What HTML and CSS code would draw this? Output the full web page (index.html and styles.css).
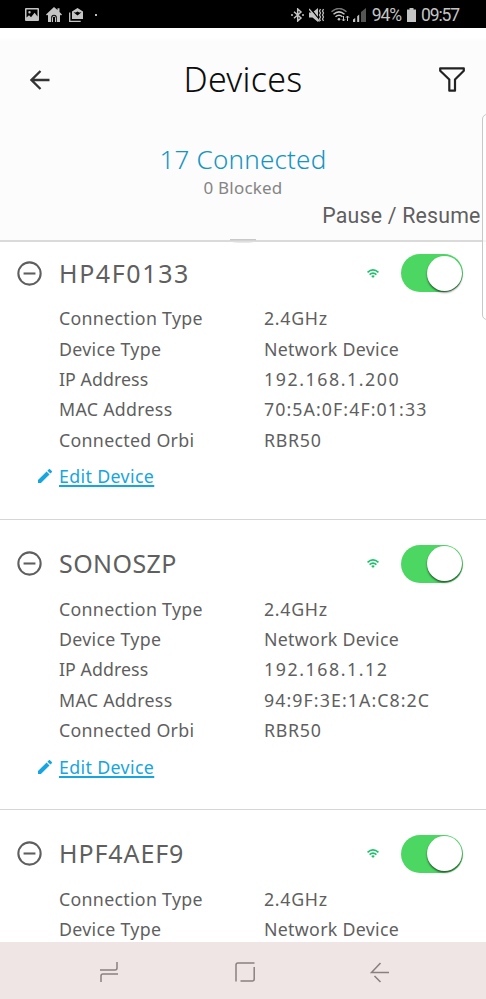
FILE: index.html
```
<!DOCTYPE html>
<html lang="en">
<head>
<meta charset="utf-8">
<title>Devices</title>
<link rel="stylesheet" href="styles.css">
</head>
<body>
<svg class="defs" width="0" height="0">
  <symbol id="minus" viewBox="0 0 24 24"><circle cx="12" cy="12" r="10.700" fill="none" stroke="currentColor" stroke-width="2"/><path d="M6.300 12h11.400" stroke="currentColor" stroke-width="2"/></symbol>
  <symbol id="wifi" viewBox="0 0 12 9"><g fill="none" stroke="currentColor" stroke-width="1.700"><path d="M.5 3.400Q6-1.500 11.500 3.400"/><path d="M2.600 5.700Q6 2.600 9.400 5.700"/></g><path d="M4.200 7Q6 5.600 7.800 7L6 8.900z" fill="currentColor"/></symbol>
  <symbol id="pencil" viewBox="3 3 18 18"><path fill="currentColor" d="M3 17.250V21h3.750L17.810 9.940l-3.750-3.750L3 17.250zM20.710 7.040c.39-.39.39-1.020 0-1.410l-2.340-2.340c-.39-.39-1.020-.39-1.410 0l-1.830 1.830 3.750 3.750 1.830-1.830z"/></symbol>
</svg>
<div class="phone">
  <div class="status">
    <div class="status-left">
      <svg width="14" height="13" viewBox="0 0 14 13"><path fill="currentColor" fill-rule="evenodd" d="M1 0h12a1 1 0 0 1 1 1v11a1 1 0 0 1-1 1H1a1 1 0 0 1-1-1V1a1 1 0 0 1 1-1zM1.500 1.500v8L4 7.300l2 1.900 3.600-4.400 2.900 3.700v-7zM4.500 3a1.200 1.200 0 1 1 0 2.400 1.200 1.200 0 0 1 0-2.400z"/></svg>
      <svg width="16" height="15" viewBox="0 0 16 15"><path fill="currentColor" d="M8 0l3.500 3V1.300h2V5L16 7.500l-1 1-1-.8V15h-3.200v-4.500a2.800 2.800 0 0 0-5.600 0V15H2V7.700l-1 .8-1-1z"/><path d="M6.500 15v-4.300a1.500 1.500 0 0 1 3 0V15" fill="none" stroke="currentColor" stroke-width="1"/></svg>
      <svg width="14" height="14" viewBox="0 0 14 14"><path fill="currentColor" fill-rule="evenodd" d="M8.500 0L14 3.500V11H3V3.500zM4.500 4.200l4 3.300 4-3.300-2.200.3-1.800-.9-1.800.9z"/><path d="M.7 4.500v8.800h11" fill="none" stroke="currentColor" stroke-width="1.300"/></svg>
      <span class="dot"></span>
    </div>
    <div class="status-right">
      <svg class="bt" width="13" height="14" viewBox="0 0 13 14"><path d="M3 3.700l7 6.300-3.300 3V1L10 4 3 10.300" fill="none" stroke="currentColor" stroke-width="1.500"/><circle cx="1" cy="7" r="1" fill="currentColor"/><circle cx="12" cy="7" r="1" fill="currentColor"/></svg>
      <svg class="mute" width="16" height="14" viewBox="0 0 16 14"><path fill="currentColor" d="M0 4.500h3.500L9 0v14L3.500 9.500H0z"/><path d="M1 0l10 12.500" stroke="#000" stroke-width="1.400"/><path d="M0 1l10.500 12.500" stroke="currentColor" stroke-width="1.300"/><path d="M11.500 1l-1 2 1 2-1 2 1 2-1 2 1 2M14.500 1l-1 2 1 2-1 2 1 2-1 2 1 2" fill="none" stroke="currentColor" stroke-width="1.200"/></svg>
      <svg class="net" width="19" height="14" viewBox="0 0 19 14"><g fill="none" stroke="currentColor" stroke-width="1.500"><path d="M.5 3.700Q8-2.700 15.500 3.700" stroke="#777"/><path d="M2.500 6.300Q8 1.500 13.500 6.300"/><path d="M4.500 8.800Q8 5.800 11.500 8.800"/></g><circle cx="8" cy="11.200" r="1.300" fill="currentColor"/><path d="M12.500 8v5m-1.500-1.700l1.500 1.700 1.500-1.700M16.500 13V8m-1.500 1.700L16.500 8 18 9.700" fill="none" stroke="currentColor"/></svg>
      <svg class="sig" width="13" height="14" viewBox="0 0 13 14"><path d="M0 11.500l2.200-1.500v4H0zM4.200 8.200L6.200 6.500V14h-2z" fill="currentColor"/><path d="M8 4L13 0v14H8z" fill="#555"/></svg>
      <span class="pct">94%</span>
      <svg class="bat" width="9" height="14" viewBox="0 0 9 14"><path fill="currentColor" d="M2.500 0h4v1.500H9V14H0V1.500h2.500z"/></svg>
      <span class="time">09:57</span>
    </div>
  </div>
  <header class="header">
    <div class="bar">
      <svg class="back" width="20" height="20" viewBox="0 0 20 20"><path d="M19.500 10H1.500M10.500 1L1.500 10l9 9" fill="none" stroke="#333" stroke-width="2.300"/></svg>
      <h1>Devices</h1>
      <svg class="filter" width="26" height="25" viewBox="0 0 26 25"><path d="M1.200 1.300h23.600v2.500l-8.800 8.700v11.200h-5.700V12.500L1.200 3.800z" fill="none" stroke="#222" stroke-width="2.200" stroke-linejoin="round"/></svg>
    </div>
    <div class="connected">17 Connected</div>
    <div class="blocked">0 Blocked</div>
    <div class="pause">Pause / Resume</div>
    <i class="handle"></i>
  </header>
  <main class="list">
    <section class="device">
      <div class="head"><svg class="minus"><use href="#minus"/></svg><h2 class="n1">HP4F0133</h2><svg class="wifi"><use href="#wifi"/></svg><span class="toggle"></span></div>
      <dl>
        <dt>Connection Type</dt><dd class="ghz">2.4GHz</dd>
        <dt>Device Type</dt><dd>Network Device</dd>
        <dt class="ip">IP Address</dt><dd class="num">192.168.1.200</dd>
        <dt>MAC Address</dt><dd class="hex">70:5A:0F:4F:01:33</dd>
        <dt>Connected Orbi</dt><dd class="orbi">RBR50</dd>
      </dl>
      <div class="edit"><svg><use href="#pencil"/></svg><a>Edit Device</a></div>
    </section>
    <section class="device">
      <div class="head"><svg class="minus"><use href="#minus"/></svg><h2 class="n2">SONOSZP</h2><svg class="wifi"><use href="#wifi"/></svg><span class="toggle"></span></div>
      <dl>
        <dt>Connection Type</dt><dd class="ghz">2.4GHz</dd>
        <dt>Device Type</dt><dd>Network Device</dd>
        <dt class="ip">IP Address</dt><dd class="num">192.168.1.12</dd>
        <dt>MAC Address</dt><dd class="hex">94:9F:3E:1A:C8:2C</dd>
        <dt>Connected Orbi</dt><dd class="orbi">RBR50</dd>
      </dl>
      <div class="edit"><svg><use href="#pencil"/></svg><a>Edit Device</a></div>
    </section>
    <section class="device">
      <div class="head"><svg class="minus"><use href="#minus"/></svg><h2 class="n3">HPF4AEF9</h2><svg class="wifi"><use href="#wifi"/></svg><span class="toggle"></span></div>
      <dl>
        <dt>Connection Type</dt><dd class="ghz">2.4GHz</dd>
        <dt>Device Type</dt><dd>Network Device</dd>
      </dl>
    </section>
  </main>
  <nav class="nav">
    <svg width="20" height="22" viewBox="0 0 20 22"><path d="M1 9h15q2 0 2-2V1M19 13H4q-2 0-2 2v6" fill="none" stroke="currentColor" stroke-width="1.500"/></svg>
    <svg width="20" height="20" viewBox="0 0 20 20"><path d="M1 19.500V3q0-2 2-2h16.500M19.200 5v12q0 2-2 2H5.500" fill="none" stroke="currentColor" stroke-width="1.500"/></svg>
    <svg width="20" height="21" viewBox="0 0 20 21"><path d="M19 10.500H1.500L10.500 1M4.500 14l6 6" fill="none" stroke="currentColor" stroke-width="1.600"/></svg>
  </nav>
  <div class="edge"></div>
</div>
</body>
</html>
```
FILE: styles.css
```
* { box-sizing: border-box; margin: 0; padding: 0; }
body { background: #fff; font-family: "Noto Sans", sans-serif; color: #5f5f5f; }
svg { display: block; flex: none; }
.defs { position: absolute; }
.phone { position: relative; width: 486px; height: 999px; overflow: hidden; display: flex; flex-direction: column; }
.status { flex: none; height: 28px; background: #000; color: #c4c4c4; display: flex; justify-content: space-between; align-items: center; padding: 1px 27px 0 25px; font-family: Roboto, sans-serif; }
.status-left, .status-right { display: flex; align-items: center; }
.status-left { gap: 7px; }
.dot { width: 2px; height: 2px; background: #bbb; margin-left: 5px; }
.mute { margin-left: 5px; }
.net { margin-left: 6px; }
.sig { margin-left: 3px; }
.pct { margin-left: 6px; font-size: 17.500px; letter-spacing: -1.100px; }
.bat { margin-left: 6px; }
.time { margin-left: 5px; font-size: 17.500px; letter-spacing: -1.100px; }
.header { position: relative; flex: none; height: 214px; background: linear-gradient(#fff 0, #fff 9px, #fcfcfc 13px); border-bottom: 2px solid #dadada; }
.bar { height: 103px; display: flex; align-items: center; justify-content: space-between; padding: 0 21px 0 30px; }
h1 { margin-left: -3px; margin-top: -1px; font-size: 34px; font-weight: 300; letter-spacing: 0.300px; color: #0c0c0c; line-height: 40px; }
.connected { height: 57px; line-height: 56px; text-align: center; font-size: 26px; font-weight: 300; letter-spacing: 0.200px; color: #1694c4; }
.blocked { height: 0; line-height: 0; text-align: center; font-size: 17px; letter-spacing: 0.200px; color: #858585; }
.pause { height: 55px; line-height: 55px; text-align: right; padding-right: 5.500px; font-family: Roboto, sans-serif; font-size: 21.300px; letter-spacing: 0.200px; }
.handle { position: absolute; left: 230px; bottom: -3px; width: 26px; height: 4px; border-radius: 0 0 50% 50%; background: linear-gradient(#c4c4c4, #eee); }
.list { flex: 1; min-height: 0; overflow: hidden; }
.device { height: 290.300px; padding-top: 20.500px; border-bottom: 1.500px solid #d6d6d6; }
.device:first-child { height: 278px; padding-top: 8.200px; }
.head { height: 46px; display: flex; align-items: center; padding: 0 23px 0 17px; }
.minus { width: 25px; height: 25px; }
h2 { margin-left: 17px; margin-top: -1px; flex: 1; font-size: 25px; font-weight: 400; line-height: 30px; }
.n1 { letter-spacing: 1.600px; }
.n2 { letter-spacing: 0.400px; }
.n3 { letter-spacing: 0.900px; }
.wifi { width: 12px; height: 9px; color: #1dc06b; margin-right: 22px; }
.toggle { width: 62px; height: 38px; border-radius: 19px; background: #4cd763; padding: 1.500px; display: flex; justify-content: flex-end; }
.toggle::before { content: ""; width: 35px; height: 35px; border-radius: 50%; background: #fff; box-shadow: 0 1.500px 2px rgba(0, 0, 0, .6); }
dl { display: grid; grid-template-columns: 205px 1fr; grid-auto-rows: 30.300px; padding-left: 59px; margin-top: 7.300px; font-size: 17.800px; line-height: 30.300px; letter-spacing: 0.290px; white-space: nowrap; }
.ip { letter-spacing: 0.050px; }
.ghz, .orbi { letter-spacing: 0.700px; }
.num { letter-spacing: 1.550px; }
.hex { letter-spacing: 1.070px; }
.edit { display: flex; align-items: center; height: 30px; margin-top: 6.500px; padding-left: 38px; color: #17a5e0; font-size: 17.800px; letter-spacing: 0.360px; }
.edit svg { width: 14px; height: 14px; margin-right: 7px; }
.edit a { text-decoration: underline; text-underline-offset: 2px; text-decoration-thickness: 1.500px; }
.nav { flex: none; height: 57px; background: #efe5e4; color: #8b8080; display: flex; justify-content: space-between; align-items: center; padding: 3px 96px 0 99px; }
.edge { position: absolute; left: 482px; top: 114px; width: 8px; height: 206px; border: 1px solid #c8c8c8; border-radius: 5px 0 0 5px; background: rgba(255, 255, 255, .7); }
```
